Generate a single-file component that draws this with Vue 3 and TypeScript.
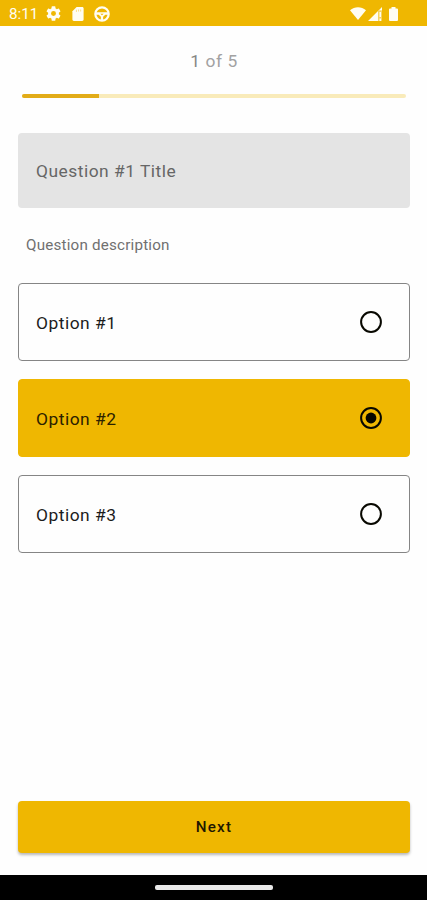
<script setup lang="ts">
import { ref } from 'vue'

const total = 5
const current = ref(1)
const selected = ref(2)
const options: { id: number; label: string }[] = [
  { id: 1, label: 'Option #1' },
  { id: 2, label: 'Option #2' },
  { id: 3, label: 'Option #3' },
]

function next() {
  if (current.value < total) current.value++
}
</script>

<template>
  <div class="screen">
    <header class="status">
      <span class="clock">8:11</span>
      <svg class="gear" viewBox="2 2 20 20">
        <path d="M19.14 12.94c.04-.3.06-.61.06-.94s-.02-.64-.07-.94l2.03-1.58a.49.49 0 0 0 .12-.61l-1.92-3.32a.49.49 0 0 0-.59-.22l-2.39.96a7 7 0 0 0-1.62-.94l-.36-2.54a.48.48 0 0 0-.48-.41h-3.84a.48.48 0 0 0-.47.41l-.36 2.54c-.59.24-1.13.57-1.62.94l-2.39-.96a.48.48 0 0 0-.59.22L2.74 8.87a.48.48 0 0 0 .12.61l2.03 1.58c-.05.3-.09.63-.09.94s.02.64.07.94l-2.03 1.58a.49.49 0 0 0-.12.61l1.92 3.32c.12.22.37.29.59.22l2.39-.96c.5.38 1.03.7 1.62.94l.36 2.54c.05.24.24.41.48.41h3.84c.24 0 .44-.17.47-.41l.36-2.54c.59-.24 1.13-.56 1.62-.94l2.39.96c.22.08.47 0 .59-.22l1.92-3.32a.48.48 0 0 0-.12-.61zM12 15.3a3.3 3.3 0 1 1 0-6.6 3.3 3.3 0 0 1 0 6.6z" />
      </svg>
      <svg class="card" viewBox="4 2 16 20">
        <path d="M18 2h-8L4 8v12c0 1.100.9 2 2 2h12c1.100 0 2-.9 2-2V4c0-1.100-.9-2-2-2z" />
        <path class="notch" d="M9 6h1.500v3H9zM12 5.500h1.500v3H12zM15 5.500h1.500v3H15z" />
      </svg>
      <svg class="wheel" viewBox="0 0 24 24">
        <circle cx="12" cy="12" r="10" fill="none" stroke="currentColor" stroke-width="3.400" />
        <path d="M3 9.500h18v3.500h-4l-3.300 3v5h-3.400v-5L7 13H3z" />
        <path class="cut" d="M9.500 11.500h5L12 14z" />
      </svg>
      <span class="spacer"></span>
      <svg class="wifi" viewBox="0 0 16 13">
        <path d="M0 3.300C4.600-.9 11.400-.9 16 3.300L8 13z" />
      </svg>
      <svg class="signal" viewBox="0 0 14 14">
        <path d="M14 0v3.500h-4V14H0z" />
        <path opacity=".4" d="M10 3.500h4V14h-4z" />
        <path d="M11.500 5H13v5h-1.500zM11.500 11.500H13V14h-1.500z" />
      </svg>
      <svg class="battery" viewBox="0 0 9 14">
        <path d="M2.500 1.500V0h4v1.500H8q1 0 1 1V13q0 1-1 1H1q-1 0-1-1V2.500q0-1 1-1z" />
      </svg>
    </header>

    <main class="content">
      <p class="count"><span class="now">{{ current }}</span> of {{ total }}</p>
      <div class="track">
        <div class="fill" :style="{ width: (current / total) * 100 + '%' }"></div>
      </div>
      <h1 class="title">Question #{{ current }} Title</h1>
      <p class="description">Question description</p>
      <div class="options" role="radiogroup">
        <div
          v-for="option in options"
          :key="option.id"
          class="option"
          :class="{ selected: option.id === selected }"
          role="radio"
          :aria-checked="option.id === selected"
          @click="selected = option.id"
        >
          <span>{{ option.label }}</span>
          <svg class="radio" viewBox="0 0 22 22">
            <circle cx="11" cy="11" r="9.900" fill="none" stroke="#080800" stroke-width="2" />
            <circle v-if="option.id === selected" cx="11" cy="11" r="5.400" fill="#080800" />
          </svg>
        </div>
      </div>
      <button class="next" type="button" @click="next">Next</button>
    </main>

    <footer class="nav"><span class="pill"></span></footer>
  </div>
</template>

<style>
body {
  margin: 0;
  background: #fefefe;
}
</style>

<style scoped>
.screen {
  width: 427px;
  height: 900px;
  display: flex;
  flex-direction: column;
  background: #fefefe;
  font-family: Roboto, "Liberation Sans", sans-serif;
  color: #1c1c1c;
}
.status {
  height: 26px;
  box-sizing: border-box;
  padding: 1px 29px 0 9px;
  display: flex;
  align-items: center;
  background: #efb701;
  color: #fffdf2;
}
.status svg {
  display: block;
  fill: currentColor;
  flex: none;
}
.clock {
  width: 37px;
  font-size: 15.200px;
  line-height: 26px;
}
.gear {
  width: 15px;
  height: 15px;
}
.card {
  width: 12px;
  height: 14px;
  margin-left: 11px;
}
.status .notch {
  fill: #efb701;
  opacity: 0.4;
}
.wheel {
  width: 16px;
  height: 16px;
  margin-left: 10px;
}
.status .cut {
  fill: #efb701;
}
.spacer {
  flex: 1;
}
.wifi {
  width: 16px;
  height: 13px;
}
.signal {
  width: 14px;
  height: 14px;
  margin-left: 2px;
}
.battery {
  width: 9px;
  height: 14px;
  margin: 0 0 0 7px;
}
.content {
  flex: 1;
  display: flex;
  flex-direction: column;
  padding: 0 17px 22px 18px;
}
.count {
  margin: 23px 0 0;
  height: 24px;
  line-height: 24px;
  text-align: center;
  font-size: 17.400px;
  letter-spacing: 0.540px;
  color: #a2a2a2;
}
.now {
  color: #858585;
}
.track {
  height: 4px;
  margin: 20.500px 4px 0;
  border-radius: 2px;
  background: #f9ebba;
  overflow: hidden;
}
.fill {
  height: 100%;
  background: #e2ac18;
}
.title {
  margin: 35.500px 0 0;
  height: 75px;
  padding: 0 18px;
  border-radius: 4px;
  background: #e4e4e4;
  color: #666;
  font-size: 17.400px;
  font-weight: 400;
  line-height: 76px;
  letter-spacing: 0.500px;
}
.description {
  margin: 27px 8px 0;
  height: 20px;
  line-height: 20px;
  font-size: 15.200px;
  letter-spacing: 0.200px;
  color: #707070;
}
.options {
  margin-top: 28px;
  display: grid;
  gap: 18px;
}
.option {
  height: 78px;
  box-sizing: border-box;
  padding: 0 27px 0 17px;
  display: flex;
  align-items: center;
  justify-content: space-between;
  border: 1px solid #858585;
  border-radius: 4px;
  font-size: 17.400px;
  letter-spacing: 0.500px;
}
.option span {
  padding-top: 2px;
}
.selected {
  background: #efb701;
  border-color: #efb701;
  color: #2b2100;
}
.radio {
  width: 22px;
  height: 22px;
  display: block;
}
.next {
  margin-top: auto;
  height: 52px;
  border: 0;
  padding: 0;
  border-radius: 4px;
  background: #efb701;
  box-shadow: 0 2px 3px rgba(0, 0, 0, 0.28);
  font: 500 15.200px Roboto, "Liberation Sans", sans-serif;
  letter-spacing: 1.250px;
  color: #1e1700;
}
.nav {
  height: 25px;
  box-sizing: border-box;
  padding-top: 9.500px;
  display: flex;
  justify-content: center;
  background: #000;
}
.pill {
  width: 118px;
  height: 5.500px;
  border-radius: 2px;
  background: #e9e9e9;
}
</style>
